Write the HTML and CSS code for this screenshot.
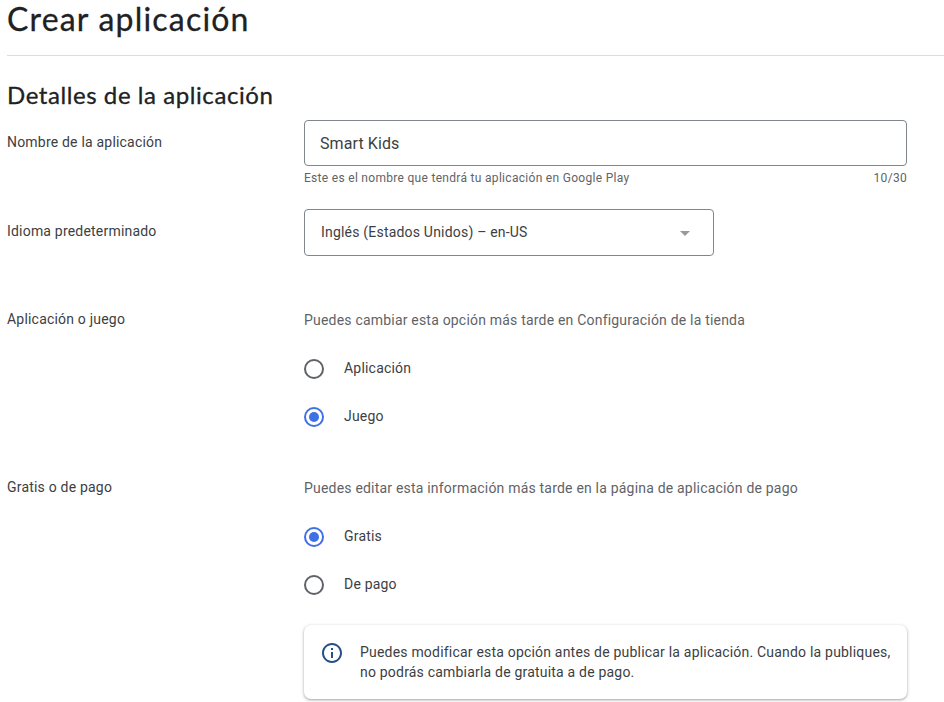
FILE: index.html
```html
<!DOCTYPE html>
<html lang="es">
<head>
<meta charset="utf-8">
<title>Crear aplicación</title>
<link rel="stylesheet" href="styles.css">
</head>
<body>
<main class="page">
  <h1 class="title"><span class="title-text">Crear aplicación</span></h1>
  <h2 class="subtitle"><span class="subtitle-text">Detalles de la aplicación</span></h2>
  <section class="row row-name">
    <div class="label">Nombre de la aplicación</div>
    <div class="field">
      <div class="input">Smart Kids</div>
      <div class="hint"><span>Este es el nombre que tendrá tu aplicación en Google Play</span><span>10/30</span></div>
    </div>
  </section>
  <section class="row row-language">
    <div class="label">Idioma predeterminado</div>
    <div class="field">
      <div class="select"><span>Inglés (Estados Unidos) – en-US</span><i class="arrow"></i></div>
    </div>
  </section>
  <section class="row row-kind">
    <div class="label">Aplicación o juego</div>
    <div class="field">
      <p class="help">Puedes cambiar esta opción más tarde en Configuración de la tienda</p>
      <div class="option"><i class="radio"></i><span>Aplicación</span></div>
      <div class="option"><i class="radio checked"></i><span>Juego</span></div>
    </div>
  </section>
  <section class="row row-price">
    <div class="label">Gratis o de pago</div>
    <div class="field">
      <p class="help">Puedes editar esta información más tarde en la página de aplicación de pago</p>
      <div class="option"><i class="radio checked"></i><span>Gratis</span></div>
      <div class="option"><i class="radio"></i><span>De pago</span></div>
      <div class="notice">
        <svg class="info" viewBox="0 0 24 24"><path d="M11 7h2v2h-2zm0 4h2v6h-2zm1-9C6.48 2 2 6.48 2 12s4.48 10 10 10 10-4.48 10-10S17.52 2 12 2zm0 18c-4.41 0-8-3.59-8-8s3.59-8 8-8 8 3.59 8 8-3.59 8-8 8z"/></svg>
        <p class="notice-text">Puedes modificar esta opción antes de publicar la aplicación. Cuando la publiques,<br>no podrás cambiarla de gratuita a de pago.</p>
      </div>
    </div>
  </section>
</main>
</body>
</html>
```
FILE: styles.css
```css
* { box-sizing: border-box; }
body { margin: 0; background: #fff; color: #3c4043; font: 14px/20px Roboto, sans-serif; letter-spacing: .2px; overflow: hidden; }
h1, h2, p { margin: 0; font-weight: 400; }
.page { height: 702px; padding-left: 7px; overflow: hidden; }
.title { height: 56px; border-bottom: 1px solid #dadce0; color: #202124; font: 32px/38px Lato, sans-serif; letter-spacing: 1.2px; -webkit-text-stroke: .3px #202124; }
.subtitle { height: 64px; padding-top: 24px; color: #202124; font: 24px/30px Lato, sans-serif; letter-spacing: .57px; -webkit-text-stroke: .3px #202124; }
.title-text, .subtitle-text { display: inline-block; white-space: nowrap; }
.row { display: grid; grid-template-columns: 297px 604px; }
.row-name { height: 89px; }
.row-language { height: 100px; }
.row-kind { height: 168px; }
.label { padding-top: 12px; }
.row-kind .label, .row-price .label { padding-top: 0; }
.input { height: 46px; width: 603px; padding: 0 15px; border: 1px solid #80868b; border-radius: 4px; font-size: 16px; line-height: 45px; letter-spacing: .1px; }
.hint { display: flex; justify-content: space-between; width: 603px; padding-top: 4px; color: #5f6368; font-size: 12px; line-height: 16px; letter-spacing: .3px; }
.select { display: flex; align-items: center; justify-content: space-between; width: 410px; height: 47px; padding: 0 23px 0 16px; border: 1px solid #80868b; border-radius: 4px; }
.select span { padding-bottom: 2px; }
.arrow { margin-top: 2px; border: 5px solid transparent; border-top-color: #999; border-bottom: 0; }
.help { height: 36px; padding-top: 1px; color: #5f6368; }
.option { display: flex; align-items: center; height: 48px; gap: 20px; }
.option span { padding-bottom: 2px; }
.radio { display: grid; place-items: center; width: 20px; height: 20px; border: 2px solid #5f6368; border-radius: 50%; }
.radio.checked { border-color: #3f70e8; }
.radio.checked::after { content: ""; width: 10px; height: 10px; border-radius: 50%; background: #3f70e8; }
.notice { display: flex; width: 603px; height: 74px; margin-top: 16px; padding: 17px 16px; gap: 16px; border-radius: 7px; box-shadow: 0 1px 2px rgba(60,64,67,.3), 0 1px 3px 1px rgba(60,64,67,.15); }
.info { flex: none; width: 24px; height: 24px; margin-top: -1px; fill: #254f87; }
.notice-text { white-space: nowrap; }
```
